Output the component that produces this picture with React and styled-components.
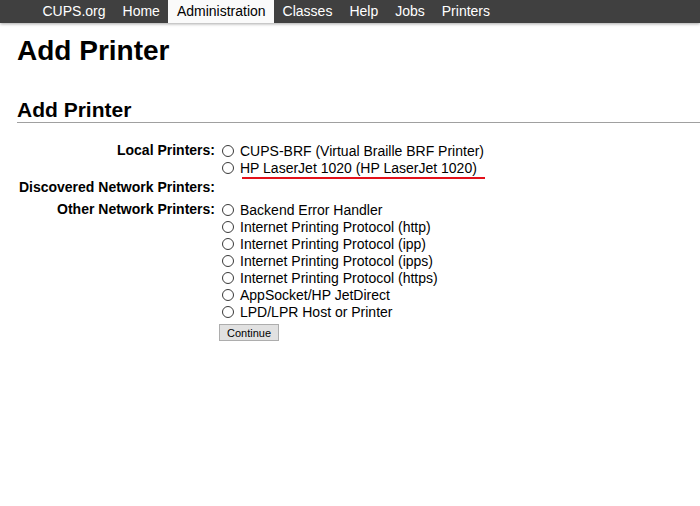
import styled, { createGlobalStyle } from "styled-components";

const GlobalStyle = createGlobalStyle`
  body {
    margin: 0;
    background: #fff;
    font-family: "Liberation Sans", Arial, sans-serif;
    color: #000;
  }
`;

const NavBar = styled.nav`
  display: flex;
  height: 23px;
  padding-left: 34px;
  background: #404040;
  box-shadow: 0 1px 3px rgba(0, 0, 0, 0.35);
`;

const NavItem = styled.a`
  display: block;
  padding: 0 8.5px;
  font-size: 14px;
  line-height: 23px;
  color: ${(p) => (p.$active ? "#000" : "#fff")};
  background: ${(p) => (p.$active ? "#fafafa" : "transparent")};
  text-decoration: none;
`;

const Page = styled.main`
  padding: 0 0 0 17px;
`;

const Title = styled.h1`
  margin: 12px 0 0;
  font-size: 28px;
  line-height: 32px;
  font-weight: 700;
`;

const Heading = styled.h2`
  margin: 30px 0 0;
  font-size: 21px;
  line-height: 25px;
  font-weight: 700;
  border-bottom: 1px solid #a0a0a0;
`;

const Form = styled.form`
  margin-top: 19px;
`;

const Row = styled.div`
  display: flex;
  column-gap: 4px;
  margin-top: ${(p) => p.$space || 0}px;
`;

const Label = styled.div`
  width: 198px;
  flex: none;
  text-align: right;
  font-size: 14px;
  font-weight: 700;
  line-height: 17px;
`;

const Options = styled.div`
  display: flex;
  flex-direction: column;
`;

const Option = styled.label`
  display: flex;
  align-items: center;
  height: 17px;
  font-size: 14px;
`;

const Radio = styled.input.attrs({ type: "radio", name: "device" })`
  appearance: none;
  width: 12px;
  height: 12px;
  margin: 0 6px 0 3px;
  border: 1px solid #3a3a3a;
  border-radius: 50%;
  background: #fff;
`;

const Marked = styled.span`
  position: relative;

  &::after {
    content: "";
    position: absolute;
    left: 2px;
    right: -8px;
    bottom: -3px;
    height: 2px;
    background: #e3111b;
  }
`;

const Button = styled.button`
  align-self: flex-start;
  margin-top: 4px;
  height: 17px;
  padding: 0 7px;
  font-family: "Liberation Sans", Arial, sans-serif;
  font-size: 11px;
  color: #000;
  background: #e1e1e1;
  border: 1px solid #adadad;
`;

const local = ["CUPS-BRF (Virtual Braille BRF Printer)"];
const other = [
  "Backend Error Handler",
  "Internet Printing Protocol (http)",
  "Internet Printing Protocol (ipp)",
  "Internet Printing Protocol (ipps)",
  "Internet Printing Protocol (https)",
  "AppSocket/HP JetDirect",
  "LPD/LPR Host or Printer",
];

export default function App() {
  return (
    <>
      <GlobalStyle />
      <NavBar>
        <NavItem>CUPS.org</NavItem>
        <NavItem>Home</NavItem>
        <NavItem $active>Administration</NavItem>
        <NavItem>Classes</NavItem>
        <NavItem>Help</NavItem>
        <NavItem>Jobs</NavItem>
        <NavItem>Printers</NavItem>
      </NavBar>
      <Page>
        <Title>Add Printer</Title>
        <Heading>Add Printer</Heading>
        <Form>
          <Row>
            <Label>Local Printers:</Label>
            <Options>
              {local.map((name) => (
                <Option key={name}>
                  <Radio />
                  {name}
                </Option>
              ))}
              <Option>
                <Radio />
                <Marked>HP LaserJet 1020 (HP LaserJet 1020)</Marked>
              </Option>
            </Options>
          </Row>
          <Row $space={3}>
            <Label>Discovered Network Printers:</Label>
          </Row>
          <Row $space={5}>
            <Label>Other Network Printers:</Label>
            <Options>
              {other.map((name) => (
                <Option key={name}>
                  <Radio />
                  {name}
                </Option>
              ))}
              <Button type="button">Continue</Button>
            </Options>
          </Row>
        </Form>
      </Page>
    </>
  );
}
